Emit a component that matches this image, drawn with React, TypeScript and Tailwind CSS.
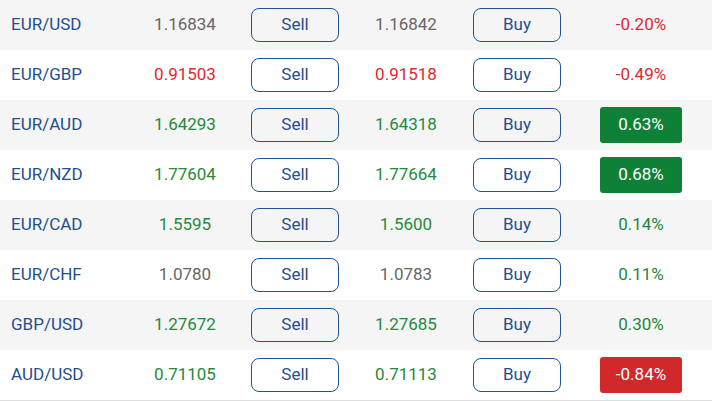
import React from "react";

type Quote = {
  pair: string;
  bid: string;
  ask: string;
  tone: "up" | "down" | "flat";
  change: string;
  badge?: "up" | "down";
};

const quotes: Quote[] = [
  { pair: "EUR/USD", bid: "1.16834", ask: "1.16842", tone: "flat", change: "-0.20%" },
  { pair: "EUR/GBP", bid: "0.91503", ask: "0.91518", tone: "down", change: "-0.49%" },
  { pair: "EUR/AUD", bid: "1.64293", ask: "1.64318", tone: "up", change: "0.63%", badge: "up" },
  { pair: "EUR/NZD", bid: "1.77604", ask: "1.77664", tone: "up", change: "0.68%", badge: "up" },
  { pair: "EUR/CAD", bid: "1.5595", ask: "1.5600", tone: "up", change: "0.14%" },
  { pair: "EUR/CHF", bid: "1.0780", ask: "1.0783", tone: "flat", change: "0.11%" },
  { pair: "GBP/USD", bid: "1.27672", ask: "1.27685", tone: "up", change: "0.30%" },
  { pair: "AUD/USD", bid: "0.71105", ask: "0.71113", tone: "up", change: "-0.84%", badge: "down" },
];

const priceColor = {
  up: "text-[#258a3c]",
  down: "text-[#e0282e]",
  flat: "text-[#666666]",
};

function TradeButton({ label }: { label: string }) {
  return (
    <button className="w-[88px] h-[34px] rounded-[8px] border border-[#1f5392] bg-transparent text-[#1f4f8f] text-[17px]">
      {label}
    </button>
  );
}

function Change({ q }: { q: Quote }) {
  if (q.badge) {
    const bg = q.badge === "up" ? "bg-[#0e8137]" : "bg-[#d1282b]";
    return (
      <span className={`${bg} w-[82px] h-[36px] rounded-[3px] text-white text-[17px] flex items-center justify-center`}>
        {q.change}
      </span>
    );
  }
  const color = q.change.startsWith("-") ? "text-[#e0282e]" : "text-[#23883a]";
  return <span className={`${color} text-[17px]`}>{q.change}</span>;
}

export default function App() {
  return (
    <div className="w-[712px] h-[401px] bg-white font-['Roboto',sans-serif]">
      <div className="border-b border-[#dddddd]">
        {quotes.map((q, i) => (
          <div
            key={q.pair}
            className={`grid grid-cols-[130px_110px_110px_112px_110px_1fr] h-[50px] items-center ${
              i % 2 === 0 ? "bg-[#f5f5f5]" : "bg-white"
            }`}
          >
            <span className="pl-[11px] text-[17px] text-[#1f4f8f]">{q.pair}</span>
            <span className={`text-center text-[17px] ${priceColor[q.tone]}`}>{q.bid}</span>
            <div className="flex justify-center">
              <TradeButton label="Sell" />
            </div>
            <span className={`text-center text-[17px] ${priceColor[q.tone]}`}>{q.ask}</span>
            <div className="flex justify-center">
              <TradeButton label="Buy" />
            </div>
            <div className="flex justify-center pr-[2px]">
              <Change q={q} />
            </div>
          </div>
        ))}
      </div>
    </div>
  );
}
